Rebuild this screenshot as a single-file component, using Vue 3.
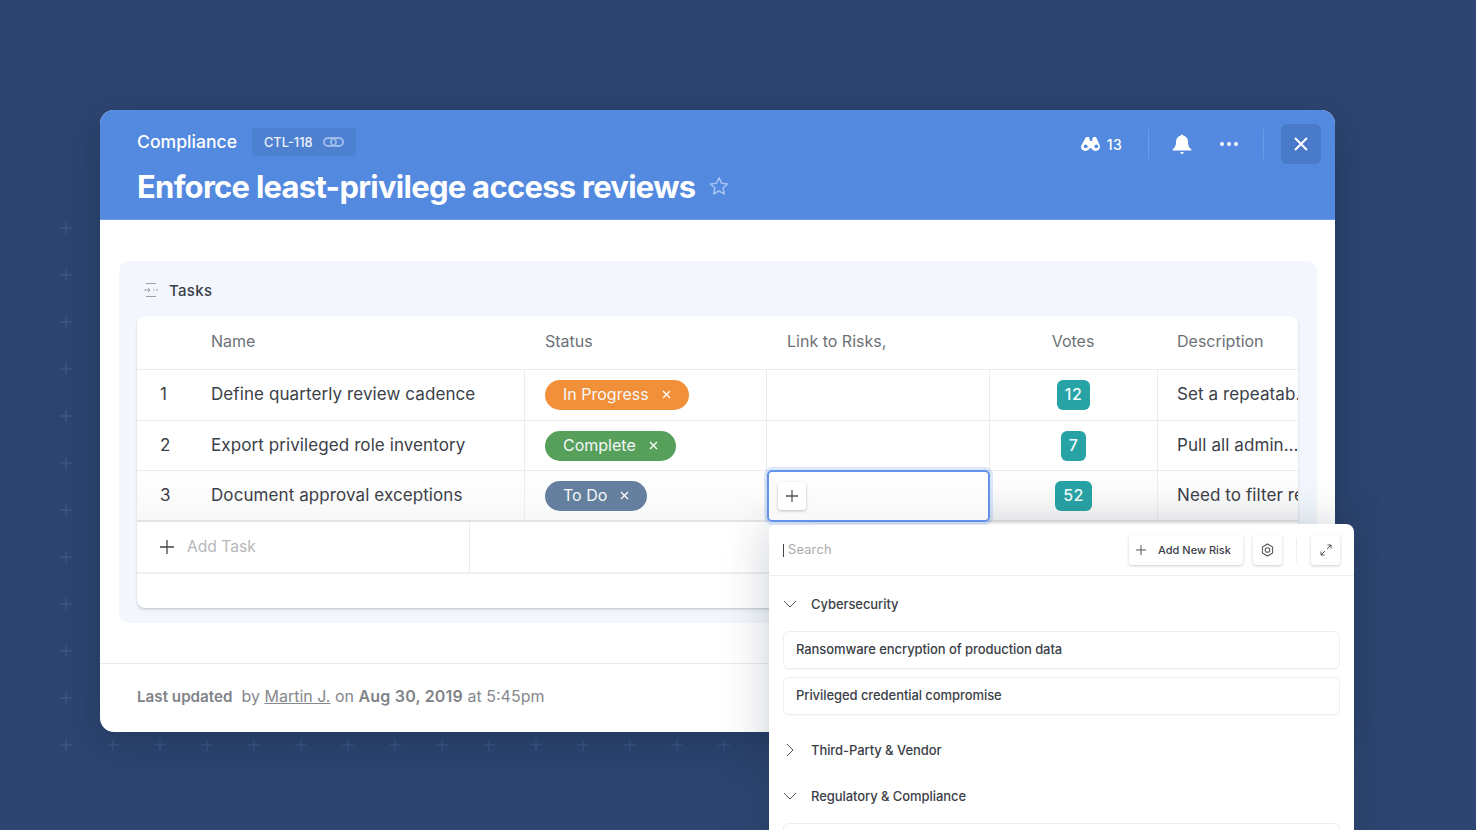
<script setup>
const crosses = []
for (let y = 228; y <= 745; y += 47) crosses.push([66, y])
for (let x = 113; x <= 725; x += 47) crosses.push([x, 745])

const rows = [
  { n: 1, name: 'Define quarterly review cadence', status: 'In Progress', cls: 'orange', votes: 12, desc: 'Set a repeatab…' },
  { n: 2, name: 'Export privileged role inventory', status: 'Complete', cls: 'green', votes: 7, desc: 'Pull all admin…' },
  { n: 3, name: 'Document approval exceptions', status: 'To Do', cls: 'slate', votes: 52, desc: 'Need to filter results' },
]
</script>

<template>
  <div class="stage">
    <svg class="crosses" width="760" height="760" viewBox="0 0 760 760">
      <path
        v-for="(c, i) in crosses"
        :key="i"
        :d="`M${c[0] - 6} ${c[1]}h12M${c[0]} ${c[1] - 6}v12`"
        stroke="#3f5f92"
        stroke-width="1"
        fill="none"
      />
    </svg>

    <div class="modal">
      <header class="head">
        <div class="head-left">
          <div class="crumbs">
            <span class="project">Compliance</span>
            <span class="tag">
              CTL-118
              <svg width="21" height="12" viewBox="0 0 21 12" fill="none" stroke="#9dbbeb" stroke-width="2">
                <rect x="1" y="2" width="12" height="8" rx="4" />
                <rect x="8" y="2" width="12" height="8" rx="4" />
              </svg>
            </span>
          </div>
          <div class="title-row">
            <h1>Enforce least-privilege access reviews</h1>
            <svg class="star" width="20" height="20" viewBox="0 0 20 20" fill="none" stroke="#a9c4f0" stroke-width="1.5" stroke-linejoin="round">
              <path d="M10 1.800l2.500 5.500 6 .7-4.400 4 1.200 5.900L10 15l-5.300 2.900 1.200-5.900-4.400-4 6-.7z" />
            </svg>
          </div>
        </div>
        <div class="head-right">
          <svg width="20" height="16" viewBox="0 0 20 16">
            <path fill="#fff" d="M5 1h3l1 4h2l1-4h3l4 9a4.500 4.500 0 0 1-8.600 2.200h-1.800A4.500 4.500 0 0 1 0 10z" />
            <circle cx="4.700" cy="10.300" r="1.900" fill="#5389df" />
            <circle cx="15.300" cy="10.300" r="1.900" fill="#5389df" />
          </svg>
          <span class="watch">13</span>
          <i class="sep first"></i>
          <svg class="bell" width="20" height="21" viewBox="0 0 20 21">
            <path fill="#fff" d="M10 .5a1.600 1.600 0 0 1 1.500 1.300c3 .7 4.500 3.200 4.500 6.200 0 3.500 1.200 6 3.500 7.500v1H.5v-1C2.800 14 4 11.500 4 8c0-3 1.500-5.500 4.500-6.200A1.600 1.600 0 0 1 10 .5z" />
            <path fill="#fff" d="M7.800 18h4.400L10 20.500z" />
          </svg>
          <span class="dots"><b></b><b></b><b></b></span>
          <i class="sep second"></i>
          <button class="close">
            <svg width="14" height="14" viewBox="0 0 14 14" stroke="#fff" stroke-width="2" fill="none">
              <path d="M1 1l12 12M13 1L1 13" />
            </svg>
          </button>
        </div>
      </header>

      <section class="panel">
        <div class="panel-title">
          <svg width="16" height="16" viewBox="0 0 16 16" fill="none" stroke="#9aa0a8" stroke-width="1">
            <path d="M3 1.500h10M3 14.500h10M1 8h6M5 6l2 2-2 2M10 8h1.500M13 8h2" />
          </svg>
          <span>Tasks</span>
        </div>

        <div class="table">
          <div class="row header">
            <div class="cell"></div>
            <div class="cell">Name</div>
            <div class="cell pad-wide">Status</div>
            <div class="cell pad-wide">Link to Risks,</div>
            <div class="cell center">Votes</div>
            <div class="cell pad">Description</div>
          </div>

          <div v-for="r in rows" :key="r.n" class="row body" :class="'r' + r.n">
            <div class="cell num">{{ r.n }}</div>
            <div class="cell">{{ r.name }}</div>
            <div class="cell pad line">
              <span class="pill" :class="r.cls">
                <span class="pill-text">{{ r.status }}</span>
                <svg width="9" height="9" viewBox="0 0 9 9" stroke="#fff" stroke-width="1.300" fill="none">
                  <path d="M1 1l7 7M8 1L1 8" />
                </svg>
              </span>
            </div>
            <div class="cell line link">
              <div v-if="r.n === 3" class="selected">
                <span class="plus-btn">
                  <svg width="14" height="14" viewBox="0 0 14 14" stroke="#555" stroke-width="1.300" fill="none">
                    <path d="M7 1v12M1 7h12" />
                  </svg>
                </span>
              </div>
            </div>
            <div class="cell line center">
              <span class="votes">{{ r.votes }}</span>
            </div>
            <div class="cell pad line desc">{{ r.desc }}</div>
          </div>

          <div class="add-row">
            <div class="add-cell">
              <svg width="14" height="14" viewBox="0 0 14 14" stroke="#444" stroke-width="1.300" fill="none">
                <path d="M7 0v14M0 7h14" />
              </svg>
              <span>Add Task</span>
            </div>
          </div>
        </div>
      </section>

      <footer class="foot">
        <b class="updated">Last updated</b>&nbsp; by <u>Martin J.</u> on <b class="date">Aug 30, 2019</b> at 5:45pm
      </footer>
    </div>

    <div class="popover">
      <div class="pop-top">
        <span class="search"><i></i>Search</span>
        <button class="mini add">
          <svg width="10" height="10" viewBox="0 0 10 10" stroke="#555" stroke-width="1" fill="none">
            <path d="M5 0v10M0 5h10" />
          </svg>
          Add New Risk
        </button>
        <button class="mini square gear">
          <svg width="13" height="14" viewBox="0 0 14 15" fill="none" stroke="#555" stroke-width="1.100">
            <path d="M7 1l5.500 3.200v6.600L7 14l-5.500-3.200V4.200z" />
            <circle cx="7" cy="7.500" r="2.500" />
          </svg>
        </button>
        <i class="pop-sep"></i>
        <button class="mini square">
          <svg width="12" height="12" viewBox="0 0 12 12" fill="none" stroke="#555" stroke-width="1">
            <path d="M7 5l4-4M7.500 1H11v3.500M5 7l-4 4M4.500 11H1V7.500" />
          </svg>
        </button>
      </div>

      <div class="pop-body">
        <div class="group">
          <svg width="14" height="8" viewBox="0 0 14 8" fill="none" stroke="#555" stroke-width="1"><path d="M1 1l6 6 6-6" /></svg>
          Cybersecurity
        </div>
        <div class="risk">Ransomware encryption of production data</div>
        <div class="risk">Privileged credential compromise</div>
        <div class="group spaced">
          <svg width="14" height="14" viewBox="0 0 14 14" fill="none" stroke="#555" stroke-width="1"><path d="M4 1l6 6-6 6" /></svg>
          Third-Party &amp; Vendor
        </div>
        <div class="group next">
          <svg width="14" height="8" viewBox="0 0 14 8" fill="none" stroke="#555" stroke-width="1"><path d="M1 1l6 6 6-6" /></svg>
          Regulatory &amp; Compliance
        </div>
        <div class="risk"></div>
      </div>
    </div>
  </div>
</template>

<style>
html,
body {
  margin: 0;
  background: #2d4671;
}
</style>

<style scoped>
.stage {
  position: relative;
  width: 1476px;
  height: 830px;
  overflow: hidden;
  padding: 110px 0 0 100px;
  box-sizing: border-box;
  background: #2d4671;
  font-family: Inter, "Noto Sans", sans-serif;
}
.crosses {
  position: absolute;
  left: 0;
  top: 0;
}
.modal {
  position: relative;
  width: 1235px;
  height: 622px;
  background: #fff;
  border-radius: 14px;
  overflow: hidden;
  box-shadow: 0 10px 40px rgba(20, 35, 65, 0.4);
}
.head {
  height: 110px;
  box-sizing: border-box;
  background: #5389df;
  border-bottom: 1px solid #6b9be6;
  display: flex;
  justify-content: space-between;
  padding: 18px 14px 0 37px;
  color: #fff;
}
.crumbs {
  display: flex;
  align-items: center;
  gap: 15px;
  height: 28px;
}
.project {
  font-size: 17.600px;
  font-weight: 500;
  margin-top: -2px;
}
.tag {
  height: 28px;
  width: 104px;
  box-sizing: border-box;
  padding-left: 12px;
  display: flex;
  align-items: center;
  gap: 10px;
  background: #4e80d1;
  border-radius: 3px;
  font-size: 12.800px;
  font-weight: 500;
  color: #eef4fd;
}
.title-row {
  display: flex;
  align-items: center;
  gap: 14px;
  margin-top: 12px;
}
.star {
  margin-top: -2px;
}
h1 {
  margin: 0;
  font-size: 31px;
  line-height: 38px;
  font-weight: 700;
  letter-spacing: -0.73px;
  white-space: nowrap;
}
.head-right {
  display: flex;
  align-items: center;
  height: 40px;
  margin-top: -4px;
}
.watch {
  font-size: 14px;
  font-weight: 500;
  letter-spacing: 0.3px;
  margin-left: 6px;
}
.sep {
  width: 1px;
  height: 30px;
  background: #6d9ae3;
}
.sep.first {
  margin: 0 23px 0 26px;
}
.sep.second {
  margin: 0 17px 0 25px;
}
.dots {
  display: flex;
  gap: 3px;
  margin-left: 28px;
}
.dots b {
  width: 4px;
  height: 4px;
  border-radius: 50%;
  background: #fff;
}
.close {
  width: 40px;
  height: 40px;
  border: 0;
  padding: 0;
  border-radius: 6px;
  background: #4a7bcb;
  display: flex;
  align-items: center;
  justify-content: center;
}
.panel {
  margin: 41px 18px 0 19px;
  height: 362px;
  background: #f3f7fd;
  border-radius: 10px;
  padding: 0 19px 0 18px;
  box-sizing: border-box;
}
.panel-title {
  height: 55px;
  display: flex;
  align-items: center;
  gap: 10px;
  padding: 3px 0 0 6px;
  box-sizing: border-box;
  font-size: 15px;
  font-weight: 500;
  letter-spacing: 0.3px;
  color: #3a3f47;
}
.table {
  height: 292px;
  background: #fff;
  border-radius: 8px;
  box-shadow: 0 1px 2px rgba(0, 0, 0, 0.1), 0 2px 3px rgba(60, 70, 90, 0.12);
  overflow: hidden;
  font-size: 17px;
  letter-spacing: 0.09px;
  color: #3b4047;
}
.row {
  display: grid;
  grid-template-columns: 74px 313px 242px 223px 168px 141px;
}
.row.header {
  height: 54px;
  color: #6d7176;
  font-size: 16px;
  letter-spacing: 0;
  border-bottom: 1px solid #ececec;
  box-sizing: border-box;
  padding-bottom: 2px;
}
.row.body {
  height: 51px;
  border-bottom: 1px solid #ececec;
  box-sizing: border-box;
}
.row.body.r2 {
  height: 50px;
}
.row.body.r3 {
  height: 51px;
  border-bottom: 2px solid #e4e4e4;
  background: linear-gradient(#fff, #f8f8f8);
}
.cell {
  display: flex;
  align-items: center;
  min-width: 0;
  white-space: nowrap;
  padding-bottom: 1px;
}
.r1 .cell {
  padding-bottom: 2px;
}
.pad {
  padding-left: 20px;
}
.pad-wide {
  padding-left: 21px;
}
.desc {
  padding-left: 19px;
  overflow: hidden;
}
.line {
  border-left: 1px solid #ececec;
}
.center {
  justify-content: center;
}
.num {
  padding-left: 23px;
}
.link {
  position: relative;
  padding-bottom: 0;
}
.selected {
  position: absolute;
  left: 0;
  top: -1px;
  width: 223px;
  height: 52px;
  box-sizing: border-box;
  border: 2px solid #6193ea;
  border-radius: 5px;
  box-shadow: 0 0 0 3px rgba(97, 147, 234, 0.22);
  background: linear-gradient(#fff, #f8f8f8);
  z-index: 1;
  padding: 10px 0 0 9px;
}
.plus-btn {
  width: 28px;
  height: 28px;
  display: flex;
  align-items: center;
  justify-content: center;
  background: #fff;
  border-radius: 3px;
  box-shadow: 0 1px 3px rgba(0, 0, 0, 0.25);
}
.pill {
  height: 30px;
  padding: 0 18px;
  border-radius: 15px;
  display: inline-flex;
  align-items: center;
  gap: 13px;
  color: #f4f6f8;
  font-size: 16px;
  letter-spacing: 0;
  margin-top: 1px;
}
.pill-text {
  margin-top: -2px;
}
.orange {
  background: #f2903a;
}
.green {
  background: #57a05c;
}
.slate {
  background: #64809e;
}
.votes {
  height: 30px;
  padding: 0 8px 1px;
  box-sizing: border-box;
  min-width: 25px;
  border-radius: 6px;
  background: #28a3a5;
  color: #f3fbfb;
  font-size: 16px;
  font-weight: 500;
  letter-spacing: 0.5px;
  display: inline-flex;
  align-items: center;
  justify-content: center;
  margin-top: 1px;
}
.add-row {
  height: 52px;
  border-bottom: 2px solid #efefef;
  box-sizing: border-box;
}
.add-cell {
  width: 333px;
  height: 100%;
  border-right: 1px solid #ececec;
  display: flex;
  align-items: center;
  gap: 13px;
  padding: 0 0 1px 23px;
  box-sizing: border-box;
  color: #b6b8bb;
  font-size: 15.600px;
  letter-spacing: 0;
}
.foot {
  margin: 40px 0 0;
  border-top: 1px solid #ebebeb;
  padding: 22px 0 0 37px;
  font-size: 16px;
  line-height: 20px;
  color: #85888c;
}
.foot b {
  font-weight: 600;
  color: #808387;
}
.updated {
  font-size: 15.200px;
}
.date {
  letter-spacing: 0.2px;
}
.popover {
  position: absolute;
  left: 769px;
  top: 524px;
  width: 585px;
  height: 340px;
  background: #fff;
  border-radius: 8px;
  box-shadow: 0 4px 46px rgba(30, 40, 60, 0.24);
  color: #3b4047;
}
.pop-top {
  height: 52px;
  box-sizing: border-box;
  border-bottom: 1px solid #efefef;
  display: flex;
  align-items: center;
  padding: 0 14px;
}
.search {
  flex: 1;
  display: flex;
  align-items: center;
  gap: 4px;
  color: #a9abae;
  font-size: 12.800px;
  letter-spacing: 0.2px;
}
.search i {
  width: 1px;
  height: 13px;
  background: #444;
  margin-top: 1px;
}
.mini {
  height: 30px;
  border: 0;
  padding: 0;
  background: #fff;
  border-radius: 3px;
  box-shadow: 0 1px 3px rgba(0, 0, 0, 0.2);
  display: inline-flex;
  align-items: center;
  justify-content: center;
  font-family: inherit;
  font-size: 11px;
  font-weight: 500;
  color: #3b4047;
}
.mini.add {
  width: 114px;
  gap: 12px;
  padding-right: 5px;
}
.mini.square {
  width: 29px;
}
.mini.gear {
  margin-left: 10px;
}
.pop-sep {
  width: 1px;
  height: 24px;
  background: #efefef;
  margin: 0 14px;
}
.pop-body {
  padding: 0 14px;
}
.group {
  height: 55px;
  display: flex;
  align-items: center;
  gap: 14px;
  font-size: 13px;
  font-weight: 500;
  letter-spacing: -0.07px;
  color: #3b4047;
}
.group.spaced {
  margin-top: 8px;
  height: 54px;
}
.group.next {
  height: 38px;
  margin-bottom: 8px;
}
.risk {
  height: 38px;
  box-sizing: border-box;
  border: 1px solid #eeeeee;
  border-radius: 6px;
  box-shadow: 0 1px 1px rgba(0, 0, 0, 0.03);
  display: flex;
  align-items: center;
  padding: 0 0 2px 12px;
  margin-bottom: 8px;
  font-size: 13px;
  font-weight: 500;
  letter-spacing: -0.07px;
}
</style>
